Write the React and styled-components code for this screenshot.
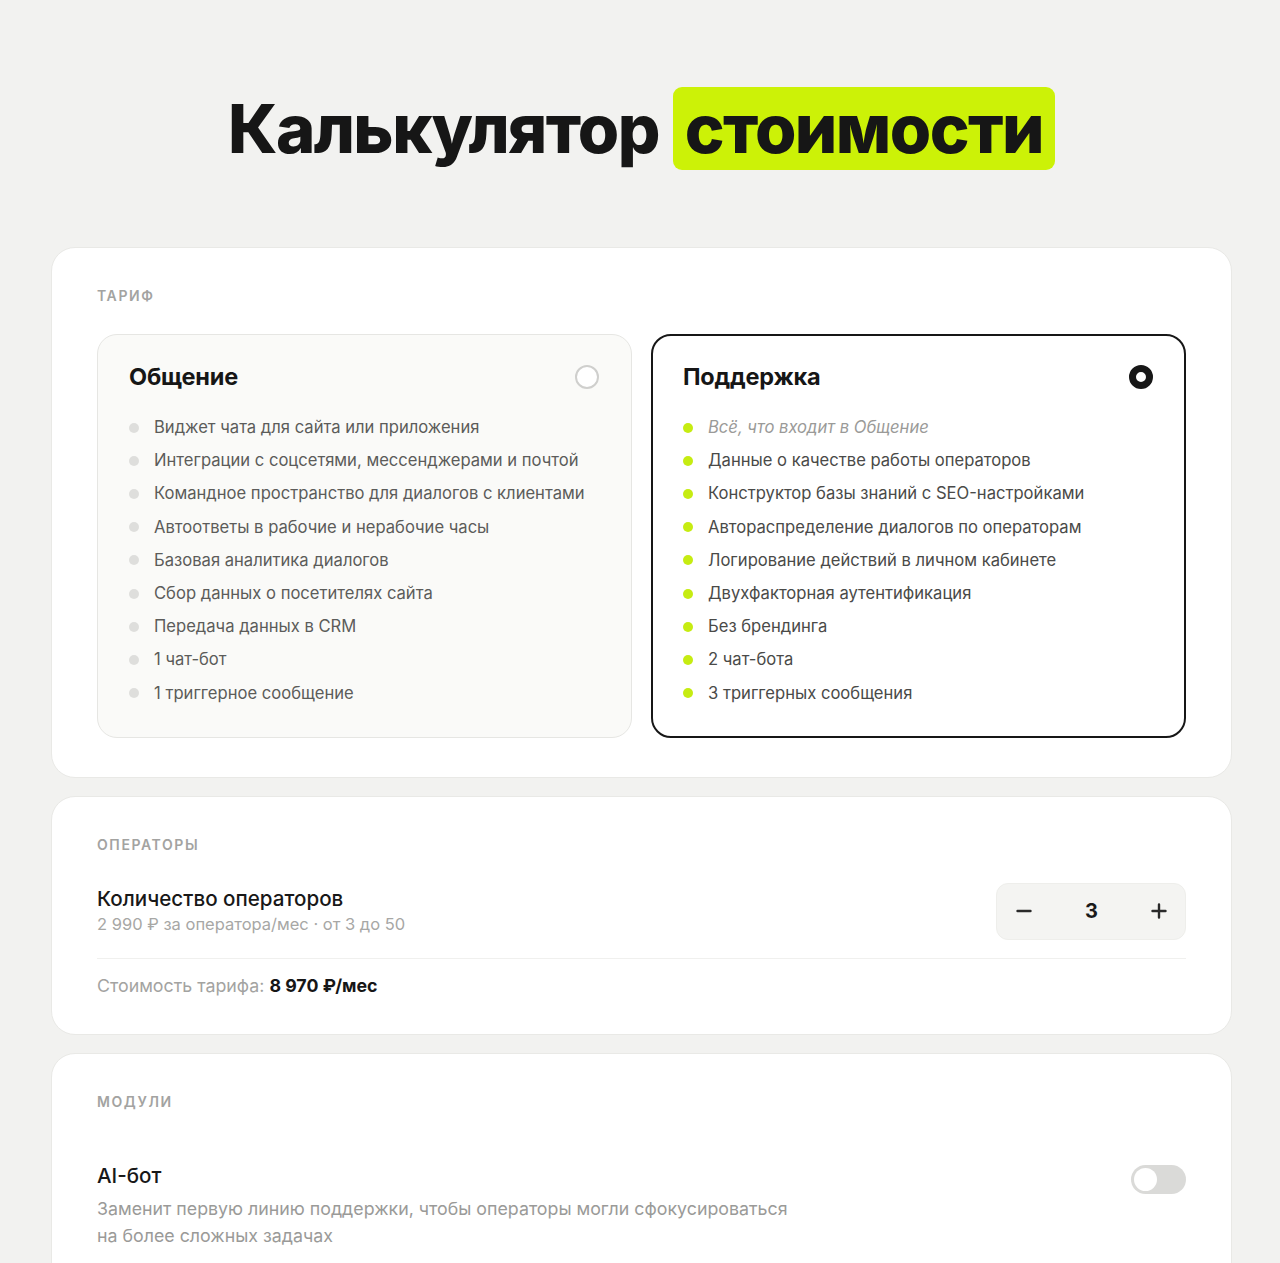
import React, { useState } from "react";
import styled, { createGlobalStyle } from "styled-components";

const Global = createGlobalStyle`
  html, body { margin: 0; padding: 0; background: #f2f2f0; }
  body { font-family: Inter, "Noto Sans", "Liberation Sans", sans-serif; color: #161616; -webkit-font-smoothing: antialiased; }
  * { box-sizing: border-box; }
`;

const Page = styled.div`
  padding: 87px 48px 40px 51px;
  display: flex; flex-direction: column; align-items: center;
`;

const Title = styled.h1`
  margin: 0 0 77px; font-size: 67px; font-weight: 800; letter-spacing: -1.6px;
  line-height: 83px; display: flex; gap: 14px; align-items: center;
`;
const Mark = styled.span`
  background: #ccf207; border-radius: 9px; padding: 0 12px;
`;

const Section = styled.section`
  width: 100%; background: #fff; border: 1px solid #e9e9e6; border-radius: 24px;
  padding: 38px 45px ${p => p.$pb || 39}px; margin-bottom: 18px;
`;
const Label = styled.div`
  font-size: 14px; font-weight: 600; letter-spacing: 1.6px; color: #a3a3a1;
  line-height: 20px; text-transform: uppercase; margin-bottom: ${p => p.$gap ?? 28}px;
`;

const PlanGrid = styled.div`
  display: grid; grid-template-columns: 1fr 1fr; gap: 19px;
`;
const Plan = styled.div`
  border-radius: 20px; cursor: pointer;
  background: ${p => p.$active ? "#fff" : "#fafaf8"};
  border: ${p => p.$active ? "2px solid #171717" : "1px solid #e6e6e3"};
  padding: ${p => p.$active ? "27px 30px 30px" : "28px 31px 31px"};
`;
const PlanHead = styled.div`
  display: flex; justify-content: space-between; align-items: center; margin-bottom: 24px;
`;
const PlanName = styled.div` font-size: 23.5px; font-weight: 700; line-height: 28px; letter-spacing: -0.2px; `;
const Radio = styled.span`
  width: 24px; height: 24px; border-radius: 50%; margin-right: 1px;
  border: ${p => p.$on ? "7px solid #171717" : "2px solid #cfcfcd"};
  background: #fff;
`;
const Features = styled.ul` list-style: none; margin: 0; padding: 0; display: flex; flex-direction: column; gap: 8px; `;
const Feature = styled.li`
  display: flex; align-items: center; gap: 15px; font-size: 16.6px; line-height: 25.2px;
  color: ${p => p.$muted ? "#9a9a98" : p.$active ? "#4a4a48" : "#5c5c5a"};
  font-style: ${p => p.$muted ? "italic" : "normal"};
  &::before {
    content: ""; width: 10px; height: 10px; border-radius: 50%; flex: none;
    background: ${p => p.$active ? "#c6ec12" : "#dededc"};
  }
`;

const Row = styled.div` display: flex; justify-content: space-between; align-items: center; `;
const RowTitle = styled.div` font-size: 20.6px; font-weight: 500; line-height: 26px; color: #181818; `;
const RowSub = styled.div` font-size: 16.5px; line-height: 24px; color: #a7a7a5; `;
const Desc = styled.div` font-size: 17.8px; line-height: 27px; color: #9a9a98; margin-top: 6px; max-width: 712px; `;

const Stepper = styled.div`
  width: 190px; height: 57px; background: #f4f4f2; border: 1px solid #eeeeeb; border-radius: 12px;
  display: flex; justify-content: space-between; align-items: center; padding: 0 10px 0 11px;
`;
const StepBtn = styled.button`
  border: none; background: none; padding: 0; width: 32px; height: 32px; cursor: pointer;
  display: flex; align-items: center; justify-content: center; color: #2a2a2a;
`;
const StepValue = styled.span` font-size: 20px; font-weight: 700; color: #1a1a1a; `;

const Divider = styled.hr` border: none; border-top: 1px solid #f0f0ee; margin: 18px 0 15px; `;
const Total = styled.div` font-size: 17.8px; line-height: 24px; color: #a3a3a1; b { color: #161616; font-weight: 700; } `;

const Module = styled.div` padding-top: 51px; `;
const Toggle = styled.button`
  width: 55px; height: 29px; border-radius: 15px; border: none; padding: 3px; cursor: pointer;
  background: ${p => p.$on ? "#c6ec12" : "#dadad8"}; display: flex;
  justify-content: ${p => p.$on ? "flex-end" : "flex-start"}; align-self: flex-start; margin-top: 2px;
  &::after { content: ""; width: 23px; height: 23px; border-radius: 50%; background: #fff; }
`;

const basePlan = [
  "Виджет чата для сайта или приложения",
  "Интеграции с соцсетями, мессенджерами и почтой",
  "Командное пространство для диалогов с клиентами",
  "Автоответы в рабочие и нерабочие часы",
  "Базовая аналитика диалогов",
  "Сбор данных о посетителях сайта",
  "Передача данных в CRM",
  "1 чат-бот",
  "1 триггерное сообщение",
];
const supportPlan = [
  "Данные о качестве работы операторов",
  "Конструктор базы знаний с SEO-настройками",
  "Автораспределение диалогов по операторам",
  "Логирование действий в личном кабинете",
  "Двухфакторная аутентификация",
  "Без брендинга",
  "2 чат-бота",
  "3 триггерных сообщения",
];

const fmt = n => n.toLocaleString("ru-RU").replace(/\u00a0|\u202f/g, " ");

export default function App() {
  const [plan, setPlan] = useState("support");
  const [ops, setOps] = useState(3);
  const [ai, setAi] = useState(false);

  return (
    <>
      <Global />
      <Page>
        <Title>Калькулятор <Mark>стоимости</Mark></Title>

        <Section>
          <Label>Тариф</Label>
          <PlanGrid>
            <Plan $active={plan === "chat"} onClick={() => setPlan("chat")}>
              <PlanHead>
                <PlanName>Общение</PlanName>
                <Radio $on={plan === "chat"} />
              </PlanHead>
              <Features>
                {basePlan.map(f => <Feature key={f} $active={plan === "chat"}>{f}</Feature>)}
              </Features>
            </Plan>
            <Plan $active={plan === "support"} onClick={() => setPlan("support")}>
              <PlanHead>
                <PlanName>Поддержка</PlanName>
                <Radio $on={plan === "support"} />
              </PlanHead>
              <Features>
                <Feature $active={plan === "support"} $muted>Всё, что входит в Общение</Feature>
                {supportPlan.map(f => <Feature key={f} $active={plan === "support"}>{f}</Feature>)}
              </Features>
            </Plan>
          </PlanGrid>
        </Section>

        <Section $pb={36}>
          <Label $gap={28}>Операторы</Label>
          <Row>
            <div>
              <RowTitle>Количество операторов</RowTitle>
              <RowSub>2 990 ₽ за оператора/мес · от 3 до 50</RowSub>
            </div>
            <Stepper>
              <StepBtn onClick={() => setOps(v => Math.max(3, v - 1))}>
                <svg width="16" height="16" viewBox="0 0 16 16"><path d="M1.5 8h13" stroke="currentColor" strokeWidth="2.4" strokeLinecap="round" /></svg>
              </StepBtn>
              <StepValue>{ops}</StepValue>
              <StepBtn onClick={() => setOps(v => Math.min(50, v + 1))}>
                <svg width="16" height="16" viewBox="0 0 16 16"><path d="M1.5 8h13M8 1.5v13" stroke="currentColor" strokeWidth="2.4" strokeLinecap="round" /></svg>
              </StepBtn>
            </Stepper>
          </Row>
          <Divider />
          <Total>Стоимость тарифа: <b>{fmt(ops * 2990)} ₽/мес</b></Total>
        </Section>

        <Section>
          <Label $gap={0}>Модули</Label>
          <Module>
            <Row>
              <div>
                <RowTitle>AI-бот</RowTitle>
                <Desc>Заменит первую линию поддержки, чтобы операторы могли сфокусироваться на более сложных задачах</Desc>
              </div>
              <Toggle $on={ai} onClick={() => setAi(v => !v)} />
            </Row>
          </Module>
        </Section>
      </Page>
    </>
  );
}
